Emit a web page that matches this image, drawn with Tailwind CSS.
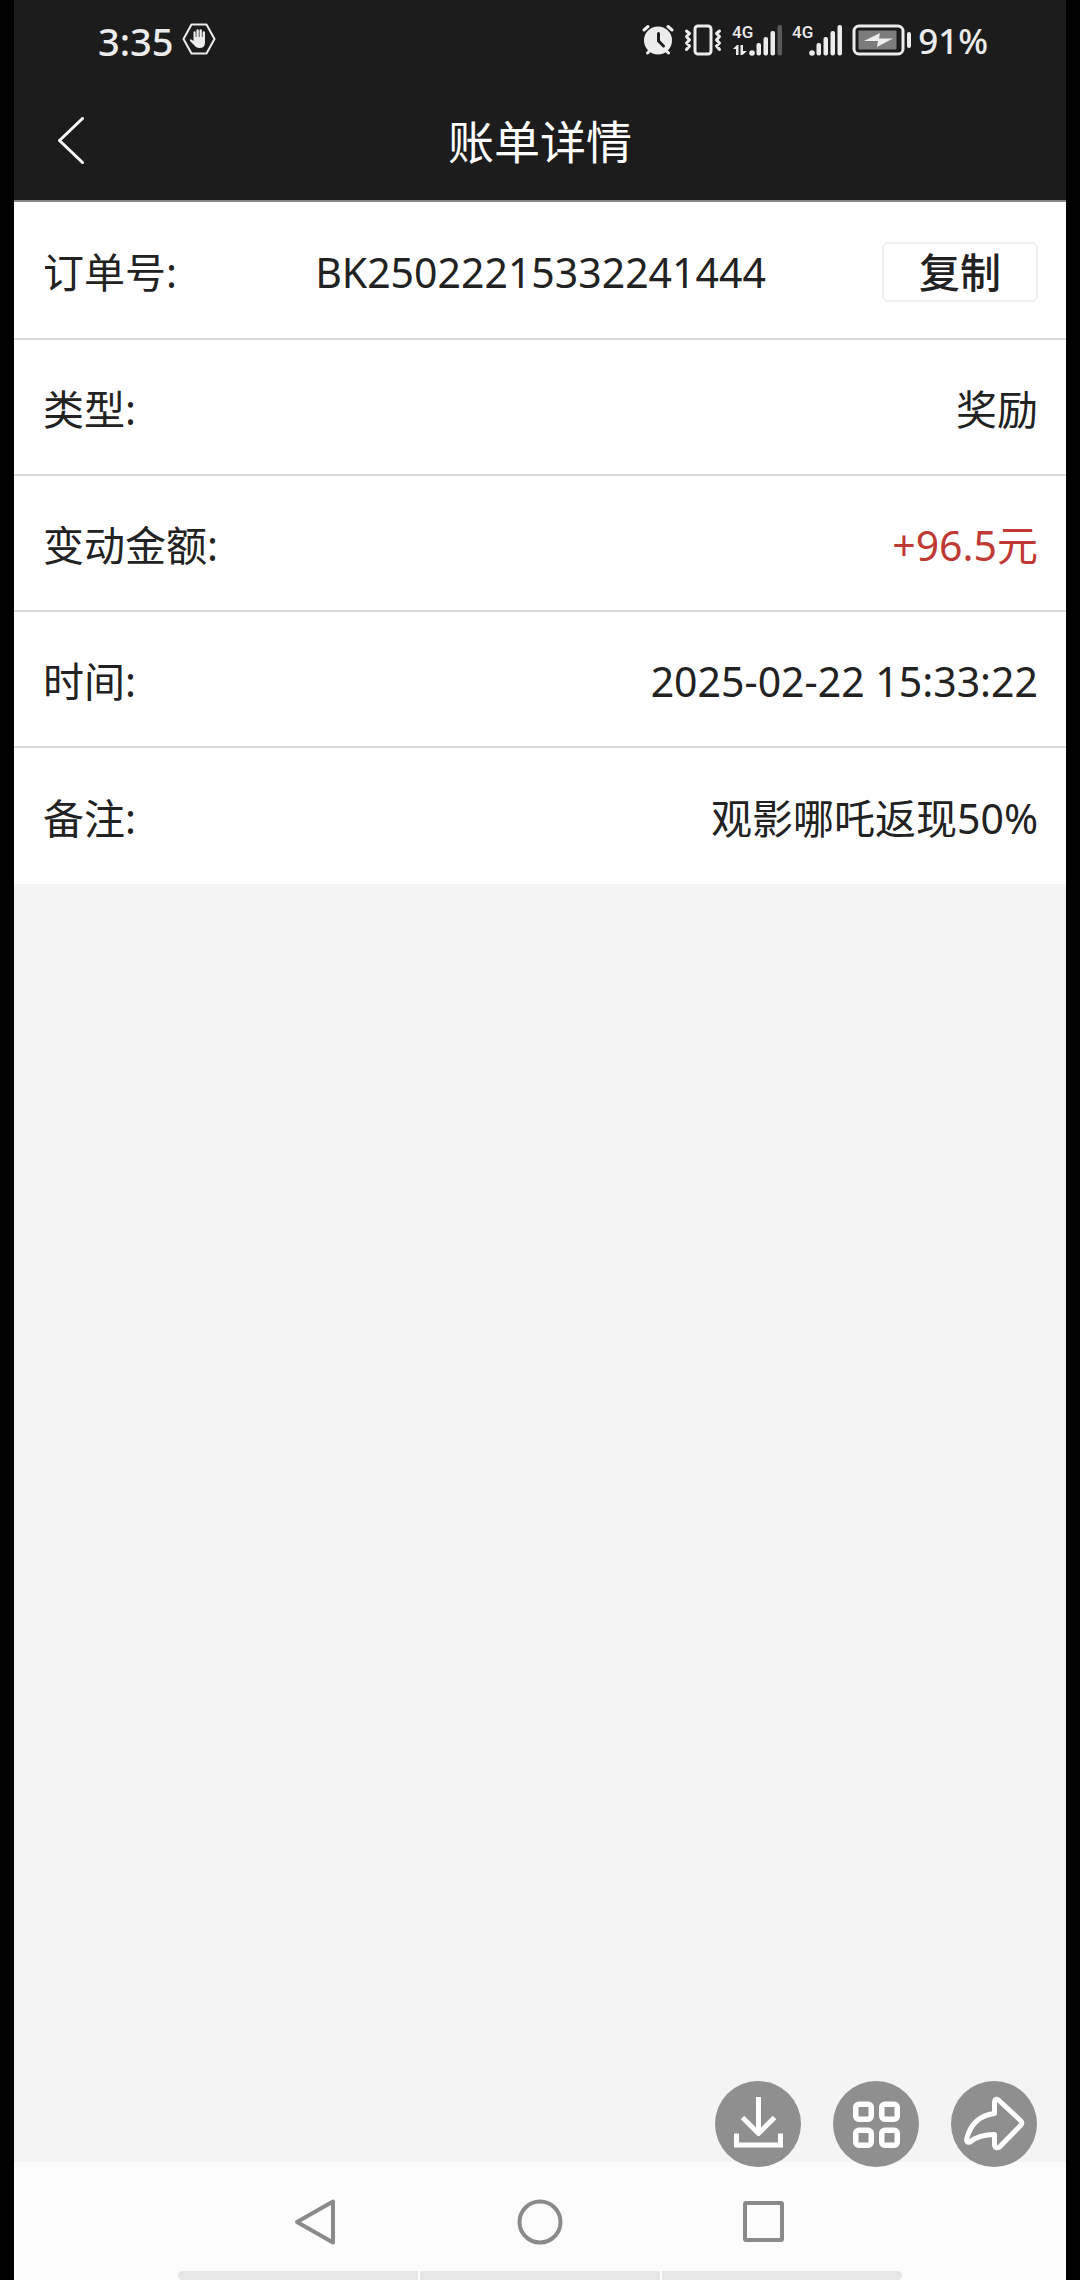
<!DOCTYPE html>
<html lang="zh-CN">
   <head>
      <meta charset="UTF-8" />
      <meta name="viewport" content="width=device-width, initial-scale=1.0" />
      <script src="https://cdn.jsdelivr.net/npm/@tailwindcss/browser@4"></script>
      <title>账单详情</title>
   </head>

   <body
      class="min-h-screen flex flex-col bg-black px-3.5 font-['Noto_Sans','Noto_Sans_CJK_SC',sans-serif] text-[#222]"
   >
      <!-- Header -->
      <header class="bg-[#1c1c1c] text-white border-b-2 border-[#8a8688]">
         <!-- Status bar -->
         <div
            class="flex justify-between items-center h-[82px] pl-[84px] pr-[78px] text-[#ececec]"
         >
            <div class="flex items-center gap-2">
               <span class="text-[38px] leading-10 font-medium">3:35</span>
               <svg class="w-[34px] h-8 mb-1" viewBox="0 0 34 32" fill="none">
                  <path
                     d="M9.5 1.5h15L32.500 16l-8 14.500h-15L1.500 16z"
                     stroke="currentColor"
                     stroke-width="2"
                     stroke-linejoin="round"
                  />
                  <path
                     d="M11.500 16.500V9.500q0-1.200 1.100-1.200t1.100 1.200V14h.7V7.500q0-1.200 1.200-1.200t1.200 1.200V14h.7V7.500q0-1.200 1.200-1.200t1.200 1.200V14h.7V9.500q0-1.200 1.200-1.200T23 9.500V20q0 5-5.500 5-3.500 0-5.500-3l-4-4q-.6-1.200.3-1.600 1-.3 3.200 1.600z"
                     fill="currentColor"
                  />
               </svg>
            </div>

            <div class="flex items-center gap-1.5">
               <div class="flex items-center gap-2.5 mb-0.5">
                  <!-- Alarm -->
                  <svg
                     class="w-8 h-8"
                     viewBox="0 0 32 32"
                     fill="none"
                     stroke="currentColor"
                     stroke-width="3"
                     stroke-linecap="round"
                  >
                     <path d="M2 6l4-3.500M30 6l-4-3.500M5.500 29l3-3M26.500 29l-3-3" />
                     <circle cx="16" cy="16.500" r="14" fill="currentColor" stroke="none" />
                     <path
                        d="M16.500 9.500v7.500l5 5"
                        stroke="#1c1c1c"
                        stroke-width="3"
                        stroke-linejoin="round"
                     />
                  </svg>
                  <!-- Vibrate -->
                  <svg
                     class="w-[38px] h-8"
                     viewBox="0 0 38 32"
                     fill="none"
                     stroke="currentColor"
                     stroke-width="3"
                     stroke-linejoin="round"
                     stroke-linecap="round"
                  >
                     <rect x="11" y="2" width="16" height="28" rx="3" />
                     <path
                        d="M2.500 7l3 2.500-3 3 3 3.500-3 3 3 3-3 3.500M35.500 7l-3 2.500 3 3-3 3.500 3 3-3 3 3 3.500"
                     />
                  </svg>
                  <!-- SIM 1 -->
                  <svg class="w-[50px] h-11" viewBox="0 -6 50 44" fill="currentColor">
                     <text
                        x="0"
                        y="14"
                        font-family="Roboto"
                        font-weight="500"
                        font-size="17"
                     >
                        4G
                     </text>
                     <path d="M1 25l4-4h1.500v10H4v-6zM8.500 21h2.500v6H15l-4.500 4H8.500z" />
                     <circle cx="20" cy="29" r="2.800" />
                     <rect x="24.500" y="19" width="4.500" height="12.500" rx="2" />
                     <rect x="31.500" y="13" width="4.500" height="18.500" rx="2" />
                     <rect x="38.500" y="7" width="4.500" height="24.500" rx="2" />
                     <rect x="45.500" y="1" width="4.500" height="30.500" rx="2" opacity=".3" />
                  </svg>
                  <!-- SIM 2 -->
                  <svg class="w-[50px] h-11" viewBox="0 -6 50 44" fill="currentColor">
                     <text
                        x="0"
                        y="14"
                        font-family="Roboto"
                        font-weight="500"
                        font-size="17"
                     >
                        4G
                     </text>
                     <circle cx="20" cy="29" r="2.800" />
                     <rect x="24.500" y="19" width="4.500" height="12.500" rx="2" />
                     <rect x="31.500" y="13" width="4.500" height="18.500" rx="2" />
                     <rect x="38.500" y="7" width="4.500" height="24.500" rx="2" />
                     <rect x="45.500" y="1" width="4.500" height="30.500" rx="2" />
                  </svg>
                  <!-- Battery -->
                  <svg class="w-[60px] h-8" viewBox="0 0 60 32" fill="none">
                     <rect
                        x="2"
                        y="2"
                        width="49"
                        height="28"
                        rx="5"
                        stroke="currentColor"
                        stroke-width="3"
                     />
                     <rect x="6.500" y="6.500" width="38" height="19" rx="1" fill="#7c7c7c" />
                     <path
                        d="M12 17L28 9l-1 5.500h14L25 23l1-6z"
                        fill="currentColor"
                     />
                     <rect x="55" y="8" width="4" height="16" rx="2" fill="currentColor" />
                  </svg>
               </div>
               <span class="text-[35px] leading-10 font-medium">91%</span>
            </div>
         </div>

         <!-- Title bar -->
         <div class="grid grid-cols-[1fr_auto_1fr] items-center h-[118px] px-[41px]">
            <button type="button" aria-label="返回" class="w-8 h-12">
               <svg
                  class="w-8 h-12"
                  viewBox="0 0 32 48"
                  fill="none"
                  stroke="currentColor"
                  stroke-width="3"
                  stroke-linecap="round"
                  stroke-linejoin="round"
               >
                  <path d="M27.500 1.500L4.500 23.500l23 22" />
               </svg>
            </button>
            <h1 class="text-[46px] leading-[60px]">账单详情</h1>
         </div>
      </header>

      <!-- Main Content -->
      <main class="flex-1 bg-[#f4f4f4]">
         <dl
            class="bg-white text-[41px] leading-[56px] divide-y-2 divide-[#d9d9d9]"
         >
            <div
               class="grid grid-cols-[1fr_auto_1fr] items-center h-[138px] pt-1 pl-[29px] pr-7"
            >
               <dt>订单号:</dt>
               <dd id="orderNo">BK25022215332241444</dd>
               <dd class="flex justify-end">
                  <button
                     type="button"
                     onclick="copyOrderNo()"
                     class="w-[156px] h-[60px] leading-[56px] border-2 border-[#efefef] rounded-md font-medium"
                  >
                     复制
                  </button>
               </dd>
            </div>
            <div class="flex justify-between items-center h-[136px] pt-1 pl-[29px] pr-7">
               <dt>类型:</dt>
               <dd>奖励</dd>
            </div>
            <div class="flex justify-between items-center h-[136px] pt-1 pl-[29px] pr-7">
               <dt>变动金额:</dt>
               <dd class="text-[#c03a35]">+96.5元</dd>
            </div>
            <div class="flex justify-between items-center h-[136px] pt-1 pl-[29px] pr-7">
               <dt>时间:</dt>
               <dd>2025-02-22 15:33:22</dd>
            </div>
            <div class="flex justify-between items-center h-[136px] pt-1 pl-[29px] pr-7">
               <dt>备注:</dt>
               <dd>观影哪吒返现50%</dd>
            </div>
         </dl>
      </main>

      <!-- Navigation bar -->
      <footer class="relative bg-[#fcfcfc] text-[#8a8a8a]">
         <!-- Floating actions -->
         <div class="absolute right-[29px] -top-[81px] flex gap-8 text-white">
            <button
               type="button"
               aria-label="下载"
               class="size-[86px] rounded-full bg-[#8f8f8f]"
            >
               <svg
                  class="size-[86px]"
                  viewBox="0 0 86 86"
                  fill="none"
                  stroke="currentColor"
                  stroke-width="5"
               >
                  <path d="M43.500 16v36" />
                  <path d="M27.500 36.500l16 16 16-16" stroke-linejoin="round" />
                  <path d="M21.500 52.500v11.500h44V52.500" />
               </svg>
            </button>
            <button
               type="button"
               aria-label="更多"
               class="size-[86px] rounded-full bg-[#8f8f8f]"
            >
               <svg
                  class="size-[86px]"
                  viewBox="0 0 86 86"
                  fill="none"
                  stroke="currentColor"
                  stroke-width="5.500"
               >
                  <rect x="22.750" y="23.250" width="15.500" height="15" rx="3" />
                  <rect x="48.750" y="23.250" width="15.500" height="15" rx="3" />
                  <rect x="22.750" y="49.250" width="15.500" height="15" rx="3" />
                  <rect x="48.750" y="49.250" width="15.500" height="15" rx="3" />
               </svg>
            </button>
            <button
               type="button"
               aria-label="分享"
               class="size-[86px] rounded-full bg-[#8f8f8f]"
            >
               <svg
                  class="size-[86px]"
                  viewBox="0 0 86 86"
                  fill="none"
                  stroke="currentColor"
                  stroke-width="5"
                  stroke-linejoin="round"
               >
                  <path
                     d="M43.500 32.500V20.500q.5-3.500 4-1.500L70 40q1.500 2 0 4L48.500 66q-4 2-5-1.500V53.500Q28 53.500 19 61q-3.500 1-3.500-2.500C19 44 27 34.500 43.500 32.500z"
                  />
               </svg>
            </button>
         </div>

         <div class="flex justify-center gap-44 pt-[35px] pb-[26px]">
            <button type="button" aria-label="后退">
               <svg
                  class="size-12"
                  viewBox="0 0 48 48"
                  fill="none"
                  stroke="currentColor"
                  stroke-width="4"
                  stroke-linejoin="round"
               >
                  <path d="M41 4.500v41L5 25z" />
               </svg>
            </button>
            <button type="button" aria-label="主页">
               <svg
                  class="size-12"
                  viewBox="0 0 48 48"
                  fill="none"
                  stroke="currentColor"
                  stroke-width="4"
               >
                  <circle cx="24" cy="25" r="20.500" />
               </svg>
            </button>
            <button type="button" aria-label="最近任务">
               <svg
                  class="size-12"
                  viewBox="0 0 48 48"
                  fill="none"
                  stroke="currentColor"
                  stroke-width="4"
               >
                  <rect x="5" y="6" width="37" height="37" rx="1" />
               </svg>
            </button>
         </div>

         <div class="mx-[164px] h-[9px] flex gap-0.5 rounded-full overflow-hidden">
            <div class="flex-1 bg-[#e7e7e7]"></div>
            <div class="flex-1 bg-[#e7e7e7]"></div>
            <div class="flex-1 bg-[#e7e7e7]"></div>
         </div>
      </footer>

      <script>
         function copyOrderNo() {
            const orderNo = document.getElementById("orderNo").textContent;
            navigator.clipboard.writeText(orderNo);
         }
      </script>
   </body>
</html>
